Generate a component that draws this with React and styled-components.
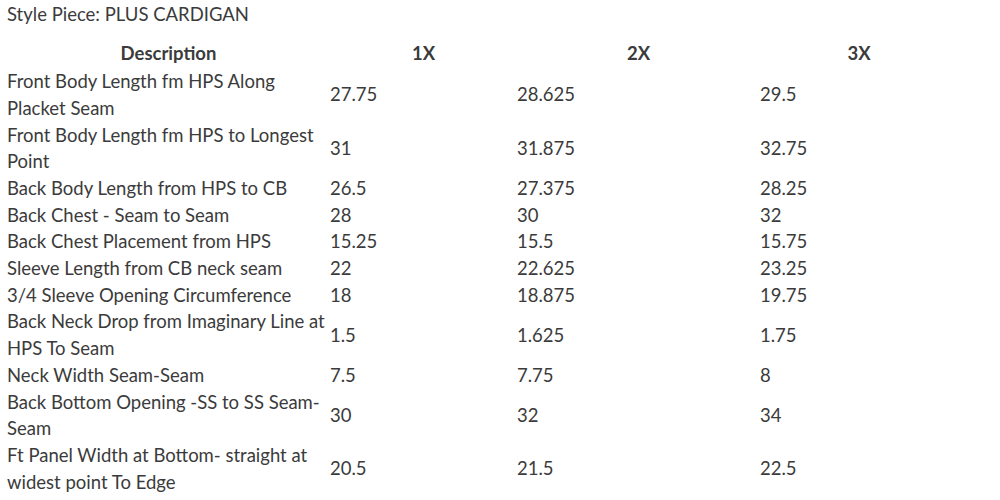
import React from "react";
import styled, { createGlobalStyle } from "styled-components";

const Global = createGlobalStyle`
  body {
    margin: 0;
    background: #fff;
    font-family: Lato, "Liberation Sans", sans-serif;
    color: #3b3b3b;
  }
`;

const Page = styled.div`
  padding: 1px 0 0 7px;
  width: 951px;
`;

const Title = styled.p`
  margin: 0 0 12.5px;
  font-size: 18.5px;
  line-height: 26.7px;
`;

const Table = styled.table`
  border-collapse: collapse;
  table-layout: fixed;
  width: 951px;
`;

const Col = styled.col`
  width: ${(p) => p.$w}px;
`;

const Head = styled.th`
  padding: 0;
  font-size: 18.5px;
  font-weight: 700;
  line-height: 27.9px;
  text-align: center;
`;

const Cell = styled.td`
  padding: 0 ${(p) => (p.$first ? 4 : 0)}px 0 0;
  font-size: 18.5px;
  line-height: 26.7px;
  vertical-align: middle;
`;

const rows = [
  ["Front Body Length fm HPS Along Placket Seam", "27.75", "28.625", "29.5"],
  ["Front Body Length fm HPS to Longest Point", "31", "31.875", "32.75"],
  ["Back Body Length from HPS to CB", "26.5", "27.375", "28.25"],
  ["Back Chest - Seam to Seam", "28", "30", "32"],
  ["Back Chest Placement from HPS", "15.25", "15.5", "15.75"],
  ["Sleeve Length from CB neck seam", "22", "22.625", "23.25"],
  ["3/4 Sleeve Opening Circumference", "18", "18.875", "19.75"],
  ["Back Neck Drop from Imaginary Line at HPS To Seam", "1.5", "1.625", "1.75"],
  ["Neck Width Seam-Seam", "7.5", "7.75", "8"],
  ["Back Bottom Opening -SS to SS Seam-Seam", "30", "32", "34"],
  ["Ft Panel Width at Bottom- straight at widest point To Edge", "20.5", "21.5", "22.5"],
];

export default function App() {
  return (
    <Page>
      <Global />
      <Title>Style Piece: PLUS CARDIGAN</Title>
      <Table>
        <colgroup>
          <Col $w={323} />
          <Col $w={187} />
          <Col $w={243} />
          <Col $w={198} />
        </colgroup>
        <thead>
          <tr>
            <Head>Description</Head>
            <Head>1X</Head>
            <Head>2X</Head>
            <Head>3X</Head>
          </tr>
        </thead>
        <tbody>
          {rows.map((r) => (
            <tr key={r[0]}>
              <Cell $first>{r[0]}</Cell>
              <Cell>{r[1]}</Cell>
              <Cell>{r[2]}</Cell>
              <Cell>{r[3]}</Cell>
            </tr>
          ))}
        </tbody>
      </Table>
    </Page>
  );
}
